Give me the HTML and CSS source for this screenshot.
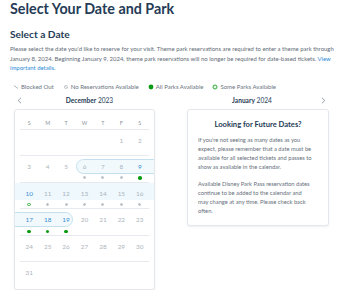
FILE: index.html
```html
<!doctype html>
<html>
<head>
	<title>Select Your Date and Park</title>
	<link rel="stylesheet" href="styles.css">
</head>

<body>
<div class="page">
<h1>Select Your Date and Park</h1>
<h2>Select a Date</h2>
<p class="intro">Please select the date you'd like to reserve for your visit. Theme park reservations are required to enter a theme park through January 8, 2024. Beginning January 9, 2024, theme park reservations will no longer be required for date-based tickets. <a href="#">View important details.</a></p>

<ul class="legend">
	<li><svg width="6" height="6" viewBox="0 0 6 6"><path d="M1 1.5L5 4.5" stroke="#9aa2ab" stroke-width=".8"/></svg>Blocked Out</li>
	<li><svg width="6" height="6" viewBox="0 0 6 6"><circle cx="3" cy="3" r="1.6" fill="none" stroke="#b3b9c0" stroke-width=".7"/><path d="M1.9 1.9L4.1 4.1" stroke="#b3b9c0" stroke-width=".6"/></svg>No Reservations Available</li>
	<li><svg width="6" height="6" viewBox="0 0 6 6"><circle cx="3" cy="3" r="2.4" fill="#0a9b14"/></svg>All Parks Available</li>
	<li><svg width="6" height="6" viewBox="0 0 6 6"><circle cx="3" cy="3" r="2" fill="#e8f6e8" stroke="#1fa32a" stroke-width=".9"/></svg>Some Parks Available</li>
</ul>

<div class="months">
	<div class="month-head">
		<span class="arrow"><svg width="5" height="7" viewBox="0 0 5 7"><path d="M4 .8L1.2 3.5 4 6.2" fill="none" stroke="#8d959e" stroke-width=".9"/></svg></span>
		<span class="month-name"><b>December</b> 2023</span>
	</div>
	<div class="month-head">
		<span class="month-name"><b>January</b> 2024</span>
		<span class="arrow"><svg width="5" height="7" viewBox="0 0 5 7"><path d="M1 .8L3.8 3.5 1 6.2" fill="none" stroke="#8d959e" stroke-width=".9"/></svg></span>
	</div>
</div>

<div class="calendars">
	<div class="card cal">
		<div class="dow"><span>S</span><span>M</span><span>T</span><span>W</span><span>T</span><span>F</span><span>S</span></div>

		<div class="week">
			<span class="day"></span><span class="day"></span><span class="day"></span><span class="day"></span><span class="day"></span>
			<span class="day"><i>1</i></span><span class="day"><i>2</i></span>
		</div>

		<div class="week">
			<div class="range range-end"></div>
			<span class="day"><i>3</i></span><span class="day"><i>4</i></span><span class="day"><i>5</i></span>
			<span class="day"><i>6</i><em class="none"></em></span>
			<span class="day"><i>7</i><em class="none"></em></span>
			<span class="day"><i>8</i><em class="none"></em></span>
			<span class="day open"><i>9</i><em class="all"></em></span>
		</div>

		<div class="week hover">
			<span class="day open"><i>10</i><em class="some"></em></span>
			<span class="day"><i>11</i><em class="none"></em></span>
			<span class="day"><i>12</i><em class="none"></em></span>
			<span class="day"><i>13</i><em class="none"></em></span>
			<span class="day"><i>14</i><em class="none"></em></span>
			<span class="day"><i>15</i><em class="none"></em></span>
			<span class="day"><i>16</i><em class="none"></em></span>
		</div>

		<div class="week">
			<div class="range range-start"></div>
			<span class="day open"><i>17</i><em class="all"></em></span>
			<span class="day open"><i>18</i><em class="all"></em></span>
			<span class="day open"><i>19</i><em class="all"></em></span>
			<span class="day"><i>20</i></span><span class="day"><i>21</i></span><span class="day"><i>22</i></span><span class="day"><i>23</i></span>
		</div>

		<div class="week">
			<span class="day"><i>24</i></span><span class="day"><i>25</i></span><span class="day"><i>26</i></span><span class="day"><i>27</i></span>
			<span class="day"><i>28</i></span><span class="day"><i>29</i></span><span class="day"><i>30</i></span>
		</div>

		<div class="week last">
			<span class="day"><i>31</i></span>
		</div>
	</div>

	<div class="card info">
		<h3>Looking for Future Dates?</h3>
		<p>If you're not seeing as many dates as you expect, please remember that a date must be available for all selected tickets and passes to show as available in the calendar.</p>
		<p>Available Disney Park Pass reservation dates continue to be added to the calendar and may change at any time. Please check back often.</p>
	</div>
</div>
</div>
</body>
</html>
```

FILE: styles.css
```css
body {
	margin: 0;
	background: #fff;
	color: #253b56;
	font-family: Lato, "Noto Sans", sans-serif;
}

.page {padding: 0 10px;}

h1 {margin: 0; font-size: 14.3px; line-height: 17px; font-weight: bold;}
h2 {margin: 11px 0 0; font-size: 10.2px; line-height: 13px; font-weight: bold;}

.intro {margin: 3px 0 0; font-size: 5.95px; line-height: 9.5px; color: #5f6b77;}
.intro a {color: #2a8ad6; text-decoration: none;}

.legend {display: flex; gap: 9px; margin: 10px 0 0 3px; padding: 0; list-style: none; font-size: 6px; line-height: 8px; color: #6b7480;}
.legend li {display: flex; align-items: center; gap: 2px;}

.months {display: grid; grid-template-columns: 141px 142px; gap: 32px; margin: 5px 0 0 4px;}
.month-head {display: flex; align-items: center; font-size: 6.6px; line-height: 9px; color: #253b56;}
.month-head b {font-weight: bold;}
.arrow {width: 10px; display: flex; justify-content: center;}
.month-head:last-child .arrow {width: 12px;}
.month-name {flex: 1; text-align: center;}

.calendars {display: flex; gap: 32px; margin: 4px 0 0 4px; align-items: flex-start;}

.card {background: #fff; border: 1px solid #e4e8ed; border-radius: 3px; box-shadow: 0 1px 2px rgba(30, 50, 80, .08);}

.cal {width: 141px; box-sizing: border-box; padding: 0 5px; overflow: hidden;}

.dow, .week {
	display: grid;
	grid-template-columns: repeat(7, 1fr);
	margin: 0 -5px;
	padding: 0 5px;
	background: linear-gradient(#e6e9ed, #e6e9ed) 5px 100% / calc(100% - 10px) 1px no-repeat;
}

.dow {padding-top: 10px; padding-bottom: 3px; font-size: 5.4px; line-height: 7px; color: #8d959e; text-align: center;}

.week {grid-template-rows: 15px 8px; padding-top: 3px; height: 26.6px; box-sizing: border-box;}
.week.last {background: none; height: 27px;}
.week.hover {
	background:
		linear-gradient(#e6e9ed, #e6e9ed) 5px 100% / calc(100% - 10px) 1px no-repeat,
		linear-gradient(#eef8fd, #eef8fd) 0 0 / 100% 17px no-repeat;
}

.day {grid-row: 1 / 3; display: flex; flex-direction: column; align-items: center;}
.day:nth-of-type(1) {grid-column: 1;}
.day:nth-of-type(2) {grid-column: 2;}
.day:nth-of-type(3) {grid-column: 3;}
.day:nth-of-type(4) {grid-column: 4;}
.day:nth-of-type(5) {grid-column: 5;}
.day:nth-of-type(6) {grid-column: 6;}
.day:nth-of-type(7) {grid-column: 7;}

.day i {font-style: normal; font-size: 6.4px; line-height: 15px; height: 15px; color: #adb4bc;}
.day.open i {color: #3a8fd1;}

.day em {display: block; width: 3.5px; height: 3.5px; margin-top: 2.3px; border-radius: 50%; box-sizing: border-box;}
.day em.all {background: #0a9b14;}
.day em.some {background: #e8f6e8; border: 1px solid #3cae45;}
.day em.none {width: 3px; height: 3px; border: .7px solid #b3b9c0; background: linear-gradient(45deg, transparent 42%, #b3b9c0 42%, #b3b9c0 58%, transparent 58%);}

.range {grid-row: 1; height: 15px; box-sizing: border-box; background: #f1f9fd; border: 1px solid #c4e0ee; border-radius: 8px;}
.range-end {grid-column: 4 / 8; margin: 0 -14px 0 1px;}
.range-start {grid-column: 1 / 4; margin: 0 2px 0 -14px;}

.info {width: 142px; box-sizing: border-box; padding: 9px 16px 10px 10px;}
.info h3 {margin: 0 -6px 0 0; font-size: 7.6px; line-height: 11px; font-weight: bold; text-align: center; color: #253b56;}
.info p {margin: 5px 0 0; font-size: 5.75px; line-height: 9px; color: #66707b;}
.info p + p {margin-top: 8px;}
```
